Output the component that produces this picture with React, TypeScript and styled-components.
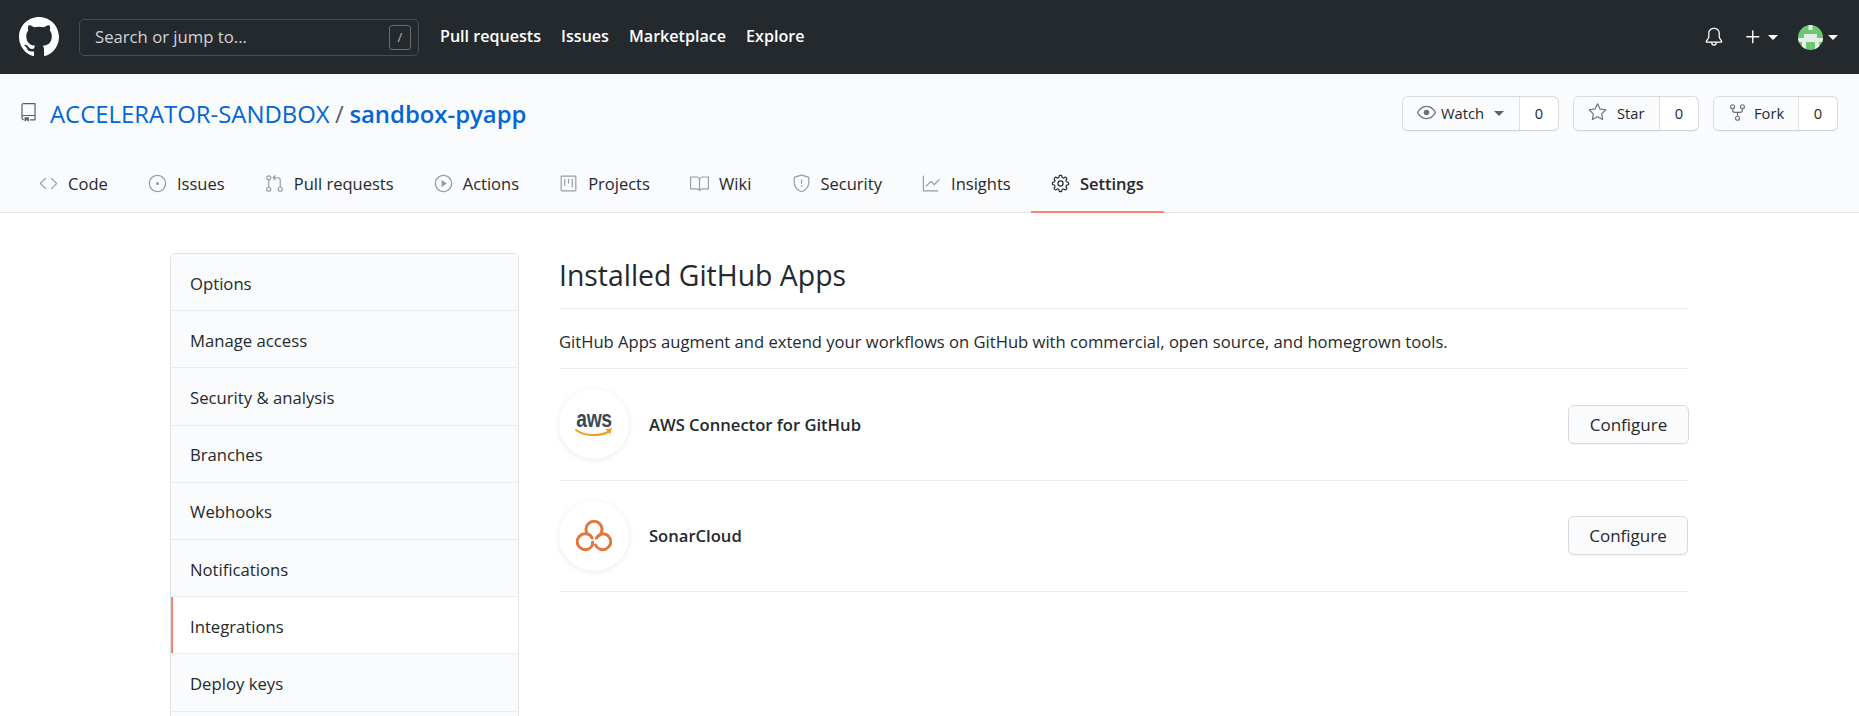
import React from "react";
import styled, { createGlobalStyle } from "styled-components";
import {
  GoRepo, GoBell, GoPlus, GoEye, GoStar, GoRepoForked, GoCode, GoIssueOpened,
  GoGitPullRequest, GoPlay, GoProject, GoBook, GoShield, GoGraph, GoGear,
} from "react-icons/go";

const Global = createGlobalStyle`
  html, body { margin: 0; padding: 0; height: 716px; overflow: hidden; background: #fff; }
  body { font-family: "Open Sans", "Liberation Sans", sans-serif; font-size: 16.6px; color: #24292e; }
  * { box-sizing: border-box; }
`;

const Page = styled.div`
  width: 1859px;
  height: 716px;
  overflow: hidden;
`;

const TopBar = styled.header`
  height: 74px;
  background: #24292e;
  display: flex;
  align-items: center;
  padding: 0 21px 0 19px;
  color: #fff;
`;

const Logo = styled.svg`
  width: 40px;
  height: 40px;
  flex: none;
`;

const SearchBox = styled.div`
  width: 340px;
  height: 37px;
  margin-left: 20px;
  border: 1px solid #494e53;
  border-radius: 5px;
  display: flex;
  align-items: center;
  justify-content: space-between;
  padding: 0 7px 2px 15px;
  color: #d3d4d5;
  font-size: 16.7px;
  flex: none;
`;

const SlashKey = styled.span`
  width: 22px;
  height: 25px;
  margin-bottom: -2px;
  border: 1px solid #6a6e72;
  border-radius: 3px;
  display: flex;
  align-items: center;
  justify-content: center;
  font-size: 13px;
  color: #b4b6b8;
`;

const TopNav = styled.nav`
  display: flex;
  gap: 20px;
  margin-left: 21px;
  padding-bottom: 2px;
`;

const TopLink = styled.a`
  color: #fff;
  font-weight: 600;
  font-size: 16.1px;
`;

const TopRight = styled.div`
  margin-left: auto;
  display: flex;
  align-items: center;
`;

const Bell = styled(GoBell)`
  width: 20px;
  height: 20px;
  margin-right: 18px;
`;

const Plus = styled(GoPlus)`
  width: 22px;
  height: 22px;
`;

const Caret = styled.span<{ $gap?: number; $dark?: boolean }>`
  display: inline-block;
  width: 0;
  height: 0;
  border-left: 5px solid transparent;
  border-right: 5px solid transparent;
  border-top: 5px solid ${(p) => (p.$dark ? "#586069" : "#fff")};
  margin-left: ${(p) => p.$gap ?? 0}px;
  margin-top: ${(p) => (p.$dark ? 2 : 0)}px;
`;

const Avatar = styled.svg`
  width: 25px;
  height: 25px;
  margin-left: 20px;
  flex: none;
`;

const RepoHead = styled.section`
  height: 139px;
  background: #fafbfc;
  border-bottom: 1px solid #e1e4e8;
  display: flex;
  flex-direction: column;
  justify-content: space-between;
`;

const RepoRow = styled.div`
  display: flex;
  align-items: flex-start;
  justify-content: space-between;
  padding: 22px 21px 0 19px;
`;

const RepoTitle = styled.h1`
  margin: 0;
  display: flex;
  align-items: center;
  height: 35px;
  font-size: 23.9px;
  font-weight: 400;
  color: #586069;
`;

const RepoIcon = styled(GoRepo)`
  width: 19px;
  height: 19px;
  color: #586069;
  margin-right: 12px;
  margin-top: -2px;
`;

const OwnerLink = styled.a`
  color: #0366d6;
`;

const TitleSlash = styled.span`
  margin: 0 5.5px;
`;

const RepoLink = styled.a`
  color: #0366d6;
  font-weight: 600;
`;

const Actions = styled.div`
  display: flex;
  gap: 14px;
`;

const CountGroup = styled.div<{ $width: number }>`
  width: ${(p) => p.$width}px;
  height: 35px;
  border: 1px solid #d9dbde;
  border-bottom-color: #d1d5da;
  border-radius: 6px;
  display: flex;
  background: #fff;
  box-shadow: 0 1px 0 rgba(27, 31, 35, 0.04);
  overflow: hidden;
  font-size: 14.7px;
  font-weight: 500;
`;

const CountButton = styled.div<{ $gap: number }>`
  flex: 1;
  background: #fafbfc;
  border-right: 1px solid #dfe1e4;
  display: flex;
  align-items: center;
  padding: 0 0 2px 14px;
  gap: ${(p) => p.$gap}px;
  svg { width: 19px; height: 19px; color: #6a737d; flex: none; }
`;

const CountValue = styled.div`
  width: 38px;
  flex: none;
  display: flex;
  align-items: center;
  justify-content: center;
  padding-bottom: 2px;
`;

const Tabs = styled.nav`
  display: flex;
  padding-left: 19px;
  height: 40px;
`;

const Tab = styled.a<{ $active?: boolean }>`
  display: flex;
  align-items: center;
  gap: 10px;
  padding: 0 20.1px 16px;
  font-size: 16.5px;
  font-weight: ${(p) => (p.$active ? 600 : 400)};
  color: #24292e;
  height: 41px;
  border-bottom: 2px solid ${(p) => (p.$active ? "#f9826c" : "transparent")};
  svg { width: 19px; height: 19px; color: ${(p) => (p.$active ? "#24292e" : "#959da5")}; flex: none; }
`;

const Content = styled.div`
  display: flex;
  padding: 40px 170px 0 170px;
  align-items: flex-start;
`;

const SideMenu = styled.aside`
  width: 349px;
  flex: none;
  border: 1px solid #e1e4e8;
  border-radius: 5px;
  overflow: hidden;
`;

const MenuItem = styled.a<{ $active?: boolean }>`
  display: flex;
  align-items: center;
  height: 57.2px;
  padding: 2px 0 0 19px;
  font-size: 16.7px;
  background: ${(p) => (p.$active ? "#fff" : "#fafbfc")};
  border-bottom: 1px solid #eaecef;
  color: #24292e;
  position: relative;
  ${(p) => p.$active && `&::before { content: ""; position: absolute; left: 0; top: 0; bottom: 0; width: 2px; background: #f9826c; }`}
`;

const Main = styled.main`
  margin-left: 40px;
  width: 1130px;
  flex: none;
`;

const Title = styled.h2`
  margin: 0;
  height: 56px;
  font-size: 28.4px;
  font-weight: 400;
  line-height: 44px;
  border-bottom: 1px solid #eaecef;
`;

const Desc = styled.p`
  margin: 0;
  height: 60px;
  padding-top: 5px;
  display: flex;
  align-items: center;
  font-size: 16.6px;
  border-bottom: 1px solid #eaecef;
`;

const AppRow = styled.div`
  height: 111.5px;
  display: flex;
  align-items: center;
  border-bottom: 1px solid #eaecef;
`;

const AppBadge = styled.div`
  width: 70px;
  height: 70px;
  border-radius: 50%;
  background: #fff;
  box-shadow: 0 1px 6px rgba(27, 31, 35, 0.09);
  display: flex;
  flex-direction: column;
  align-items: center;
  justify-content: center;
  flex: none;
`;

const AwsWord = styled.span`
  font-family: "Liberation Sans", sans-serif;
  font-weight: 700;
  font-size: 23px;
  line-height: 17px;
  letter-spacing: -0.5px;
  color: #3d4856;
  transform: scaleX(0.84);
`;

const AwsSmile = styled.svg`
  width: 38px;
  height: 10px;
  display: block;
`;

const SonarMark = styled.svg`
  width: 36px;
  height: 32px;
  display: block;
`;

const AppName = styled.strong`
  margin-left: 20px;
  font-size: 16.6px;
  font-weight: 600;
`;

const ConfigureButton = styled.button<{ $width: number }>`
  margin-left: auto;
  margin-right: ${(p) => 121 - p.$width}px;
  width: ${(p) => p.$width}px;
  height: 39px;
  background: #fafbfc;
  border: 1px solid #d8dadd;
  border-radius: 6px;
  font-family: inherit;
  font-size: 17px;
  font-weight: 500;
  color: #24292e;
  box-shadow: 0 1px 0 rgba(27, 31, 35, 0.04);
`;

const menu = ["Options", "Manage access", "Security & analysis", "Branches", "Webhooks", "Notifications", "Integrations", "Deploy keys", ""];

const tabs = [
  { label: "Code", Icon: GoCode },
  { label: "Issues", Icon: GoIssueOpened },
  { label: "Pull requests", Icon: GoGitPullRequest },
  { label: "Actions", Icon: GoPlay },
  { label: "Projects", Icon: GoProject },
  { label: "Wiki", Icon: GoBook },
  { label: "Security", Icon: GoShield },
  { label: "Insights", Icon: GoGraph },
  { label: "Settings", Icon: GoGear, active: true },
];

export default function App() {
  return (
    <Page>
      <Global />
      <TopBar>
        <Logo viewBox="0 0 16 16" fill="#fff">
          <path d="M8 0C3.58 0 0 3.58 0 8c0 3.54 2.29 6.53 5.47 7.59.4.07.55-.17.55-.38 0-.19-.01-.82-.01-1.49-2.01.37-2.53-.49-2.69-.94-.09-.23-.48-.94-.82-1.13-.28-.15-.68-.52-.01-.53.63-.01 1.08.58 1.23.82.72 1.21 1.87.87 2.33.66.07-.52.28-.87.51-1.07-1.78-.2-3.64-.89-3.64-3.95 0-.87.31-1.59.82-2.15-.08-.2-.36-1.02.08-2.12 0 0 .67-.21 2.2.82.64-.18 1.32-.27 2-.27.68 0 1.36.09 2 .27 1.53-1.04 2.2-.82 2.2-.82.44 1.1.16 1.92.08 2.12.51.56.82 1.27.82 2.15 0 3.07-1.87 3.75-3.65 3.95.29.25.54.73.54 1.48 0 1.07-.01 1.93-.01 2.2 0 .21.15.46.55.38A8.013 8.013 0 0016 8c0-4.42-3.58-8-8-8z" />
        </Logo>
        <SearchBox>
          Search or jump to...
          <SlashKey>/</SlashKey>
        </SearchBox>
        <TopNav>
          <TopLink>Pull requests</TopLink>
          <TopLink>Issues</TopLink>
          <TopLink>Marketplace</TopLink>
          <TopLink>Explore</TopLink>
        </TopNav>
        <TopRight>
          <Bell />
          <Plus />
          <Caret $gap={4} />
          <Avatar viewBox="0 0 25 25">
            <defs>
              <clipPath id="avatar-disc">
                <circle cx="12.5" cy="12.5" r="12.5" />
              </clipPath>
            </defs>
            <g clipPath="url(#avatar-disc)">
              <rect width="25" height="25" fill="#6bc871" />
              <path d="M10.5 0h4v5h-4zM0 13h6V9h13v4h6v4h-4v8h-4v-8H8v8H4v-8H0z" fill="#e6ece6" />
            </g>
          </Avatar>
          <Caret $gap={5} />
        </TopRight>
      </TopBar>
      <RepoHead>
        <RepoRow>
          <RepoTitle>
            <RepoIcon />
            <OwnerLink>ACCELERATOR-SANDBOX</OwnerLink>
            <TitleSlash>/</TitleSlash>
            <RepoLink>sandbox-pyapp</RepoLink>
          </RepoTitle>
          <Actions>
            <CountGroup $width={157}>
              <CountButton $gap={5}><GoEye />Watch<Caret $gap={5} $dark /></CountButton>
              <CountValue>0</CountValue>
            </CountGroup>
            <CountGroup $width={126}>
              <CountButton $gap={10}><GoStar />Star</CountButton>
              <CountValue>0</CountValue>
            </CountGroup>
            <CountGroup $width={125}>
              <CountButton $gap={7}><GoRepoForked />Fork</CountButton>
              <CountValue>0</CountValue>
            </CountGroup>
          </Actions>
        </RepoRow>
        <Tabs>
          {tabs.map(({ label, Icon, active }) => (
            <Tab key={label} $active={active}><Icon />{label}</Tab>
          ))}
        </Tabs>
      </RepoHead>
      <Content>
        <SideMenu>
          {menu.map((m, i) => (
            <MenuItem key={i} $active={m === "Integrations"}>{m}</MenuItem>
          ))}
        </SideMenu>
        <Main>
          <Title>Installed GitHub Apps</Title>
          <Desc>GitHub Apps augment and extend your workflows on GitHub with commercial, open source, and homegrown tools.</Desc>
          <AppRow>
            <AppBadge>
              <AwsWord>aws</AwsWord>
              <AwsSmile viewBox="0 0 38 10">
                <path d="M1 2C9 8 24 9 34 3.5" fill="none" stroke="#f29d1f" strokeWidth="2" strokeLinecap="round" />
                <path d="M30.5 1l6.5-.5-2 6z" fill="#f29d1f" />
              </AwsSmile>
            </AppBadge>
            <AppName>AWS Connector for GitHub</AppName>
            <ConfigureButton $width={121}>Configure</ConfigureButton>
          </AppRow>
          <AppRow>
            <AppBadge>
              <SonarMark viewBox="0 0 36 32">
                <path
                  d="M11.5 14A8 8 0 1 0 16.5 25V22M24.5 14A8 8 0 1 1 19.5 25M11.5 14A8 8 0 1 1 24.5 14M10.5 13.8C13 14 15 15.5 16 18M25 14.5C23 15 21.5 16 20.5 18"
                  fill="none"
                  stroke="#e4773d"
                  strokeWidth="3"
                  strokeLinecap="round"
                />
              </SonarMark>
            </AppBadge>
            <AppName>SonarCloud</AppName>
            <ConfigureButton $width={120}>Configure</ConfigureButton>
          </AppRow>
        </Main>
      </Content>
    </Page>
  );
}
